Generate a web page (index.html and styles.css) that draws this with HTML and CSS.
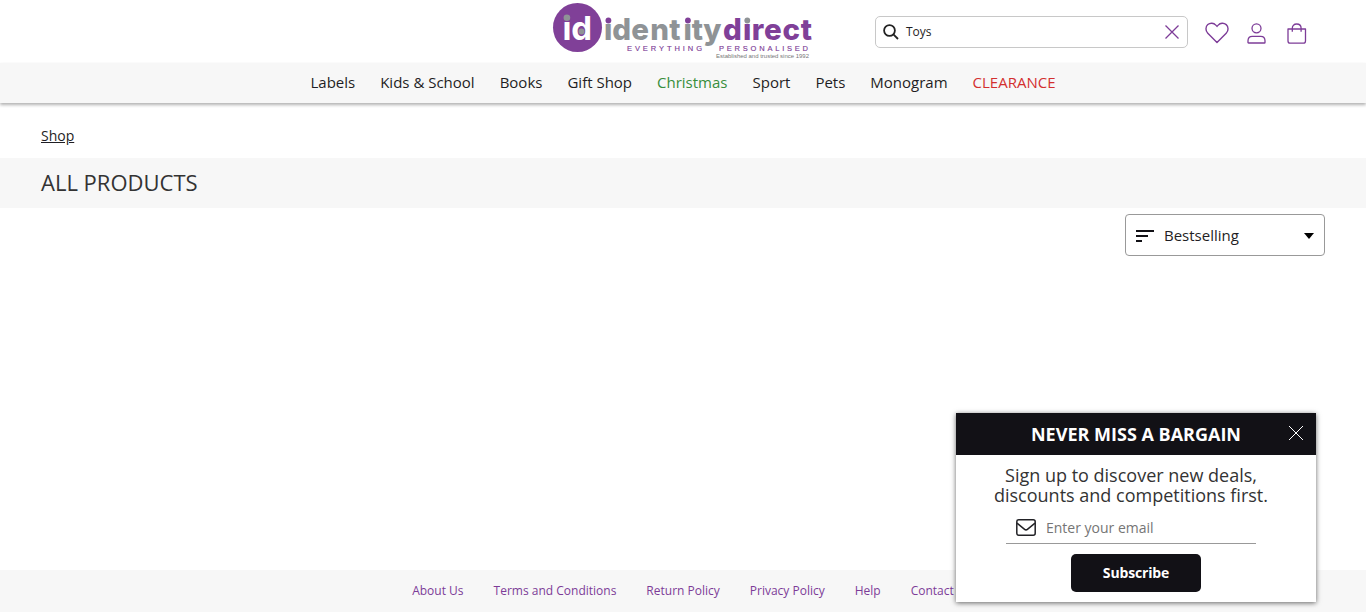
FILE: index.html
```html
<!DOCTYPE html>
<html lang="en">
<head>
<meta charset="utf-8">
<title>All Products | Identity Direct</title>
<link rel="stylesheet" href="styles.css">
</head>
<body>
<header class="header">
  <a class="logo" aria-label="Identity Direct">
    <svg width="264" height="62" viewBox="0 0 264 62">
      <circle cx="25.500" cy="27.500" r="24.500" fill="#804098"/>
      <text class="logo-mark" x="10.400 19.200" y="39.500">ıd</text>
      <circle cx="14.900" cy="17.700" r="3.300" fill="#8f9396"/>
      <circle cx="29.500" cy="31.400" r="3" fill="#8f9396"/>
      <text class="logo-word grey" x="52 60.300 79.300 98.300 117.300 131.500 139.700 151.200" y="40">ıdentıty</text>
      <text class="logo-word purple" x="171 190.900 199.800 212 230.500 248.700" y="40">dırect</text>
      <circle cx="56.400" cy="20.500" r="2.900" fill="#804098"/>
      <circle cx="135.900" cy="20.500" r="2.900" fill="#804098"/>
      <circle cx="195.300" cy="20.500" r="2.900" fill="#8f9396"/>
      <text class="logo-tag" x="75" y="51" textLength="75">EVERYTHING</text>
      <text class="logo-tag" x="167" y="51" textLength="89">PERSONALISED</text>
      <text class="logo-small" x="164" y="58" textLength="93" lengthAdjust="spacingAndGlyphs">Established and trusted since 1992</text>
    </svg>
  </a>
  <div class="search">
    <svg class="search-icon" width="16" height="16" viewBox="0 0 16 16" fill="none" stroke="#222" stroke-width="1.800"><circle cx="6.500" cy="6.500" r="5.400"/><path d="M10.400 10.400 15 15"/></svg>
    <span class="search-text">Toys</span>
    <svg width="14" height="14" viewBox="0 0 14 14" fill="none" stroke="#7d3c98" stroke-width="1.300"><path d="M.5.500l13 13M13.500.500l-13 13"/></svg>
  </div>
  <div class="actions">
    <svg width="24" height="22" viewBox="0 0 24 22" fill="none" stroke="#7d3c98" stroke-width="1.400" stroke-linejoin="round"><path d="M12 20.500 2.800 11.300C.2 8.600.5 4.700 2.800 2.600 5.200.500 8.700.800 10.800 3.100L12 4.400l1.200-1.300c2.100-2.300 5.600-2.600 8-.5 2.300 2.100 2.600 6 0 8.700z"/></svg>
    <svg width="19" height="22" viewBox="0 0 19 22" fill="none" stroke="#7d3c98" stroke-width="1.300" stroke-linejoin="round"><circle cx="9.500" cy="6.300" r="4.500"/><path d="M1 20.400v-1.600c0-2.800 1.700-4.500 4.200-4.500h8.600c2.500 0 4.200 1.700 4.200 4.500v1.600c0 .4-.3.600-.6.600H1.600c-.4 0-.6-.2-.6-.600z"/></svg>
    <svg width="20" height="22" viewBox="0 0 20 22" fill="none" stroke="#7d3c98" stroke-width="1.300" stroke-linejoin="round"><path d="M1 7h17.500v12c0 1.400-.8 2.200-2.200 2.200H3.200C1.800 21.200 1 20.400 1 19z"/><path d="M5.300 9.800V6.300c0-2.700 1.700-4.300 4.400-4.300s4.400 1.600 4.400 4.300v3.500"/></svg>
  </div>
</header>
<nav class="nav">
  <a>Labels</a><a>Kids &amp; School</a><a>Books</a><a>Gift Shop</a><a class="green">Christmas</a><a>Sport</a><a>Pets</a><a>Monogram</a><a class="red">CLEARANCE</a>
</nav>
<main class="main">
  <div class="crumbs"><a>Shop</a></div>
  <h1 class="title">ALL PRODUCTS</h1>
  <div class="toolbar">
    <div class="sort">
      <svg width="18" height="12" viewBox="0 0 18 12" fill="#121116"><path d="M0 0h18v2H0zM0 5h12v2H0zM0 10h6v2H0z"/></svg>
      <span class="sort-text">Bestselling</span>
      <svg width="10" height="6" viewBox="0 0 10 6"><path d="M0 0h10L5 6z"/></svg>
    </div>
  </div>
</main>
<footer class="footer">
  <a>About Us</a><a>Terms and Conditions</a><a>Return Policy</a><a>Privacy Policy</a><a>Help</a><a>Contact</a>
</footer>
<aside class="popup">
  <div class="popup-head">
    <span>NEVER MISS A BARGAIN</span>
    <svg class="popup-close" width="16" height="16" viewBox="0 0 16 16" fill="none" stroke="#fff" stroke-width="1"><path d="M1 1l14 14M15 1 1 15"/></svg>
  </div>
  <div class="popup-body">
    <p class="popup-copy">Sign up to discover new deals,<br>discounts and competitions first.</p>
    <div class="email">
      <svg width="20" height="17" viewBox="0 0 20 17" fill="none" stroke="#222226" stroke-width="1.500" stroke-linejoin="round"><rect x=".8" y=".8" width="18.400" height="15.400" rx="2"/><path d="M1 4.200l7.300 6c1.100.9 2.300.9 3.400 0l7.300-6"/></svg>
      <span>Enter your email</span>
    </div>
    <div class="subscribe">Subscribe</div>
  </div>
</aside>
</body>
</html>
```
FILE: styles.css
```css
* { box-sizing: border-box; }
body {
  margin: 0;
  height: 612px;
  overflow: hidden;
  display: flex;
  flex-direction: column;
  font-family: "Open Sans", sans-serif;
  font-weight: 400;
  color: #1f1e24;
  background: #fff;
}
svg { display: block; flex: none; }

.header {
  height: 63px;
  flex: none;
  display: grid;
  grid-template-columns: 323px 313px auto;
  padding-left: 552px;
  align-items: start;
}
.logo-mark { font: 700 33px Inter, sans-serif; fill: #fff; }
.logo-word { font: 800 29.500px Inter, sans-serif; }
.grey { fill: #8f9396; }
.purple { fill: #804098; }
.logo-tag { font: 400 7.500px "Liberation Sans", sans-serif; fill: #804098; stroke: #804098; stroke-width: .15px; }
.logo-small { font: 400 6px "Liberation Sans", sans-serif; fill: #777; }

.search {
  height: 32px;
  margin-top: 16px;
  padding: 0 8px 0 7px;
  display: flex;
  align-items: center;
  border: 1px solid #c8c8c8;
  border-radius: 5px;
  font-size: 12px;
}
.search-text { flex: 1; padding: 0 0 1px 7px; }
.actions { display: flex; padding: 22px 0 0 17px; }
.actions svg { margin-right: 18px; }
.actions svg:nth-child(2) { margin-right: 21px; }

.nav {
  height: 40px;
  flex: none;
  display: flex;
  justify-content: center;
  gap: 25px;
  line-height: 39px;
  font-size: 15px;
  background: #f7f7f7;
  box-shadow: 0 2px 3px rgba(0, 0, 0, .3);
}
.green { color: #388e3c; }
.red { color: #d32f2f; }

.main { flex: 1; }
.crumbs { height: 55px; padding: 23px 41px 0; font-size: 14px; line-height: 20px; }
.crumbs a { text-decoration: underline; }
.title {
  margin: 0;
  height: 50px;
  padding: 0 41px;
  line-height: 49px;
  font-size: 22px;
  font-weight: 400;
  color: #333;
  background: #f7f7f7;
}
.toolbar { display: flex; justify-content: flex-end; padding: 6px 41px 0; }
.sort {
  width: 200px;
  height: 42px;
  padding: 0 10px;
  display: flex;
  align-items: center;
  border: 1px solid #999;
  border-radius: 4px;
  font-size: 15px;
}
.sort svg { margin-top: 1px; }
.sort-text { flex: 1; padding-left: 10px; }

.footer {
  height: 42px;
  flex: none;
  display: flex;
  justify-content: center;
  gap: 30px;
  line-height: 41px;
  font-size: 12px;
  color: #7d3c98;
  background: #f7f7f7;
}

.popup {
  position: absolute;
  right: 50px;
  bottom: 10px;
  width: 360px;
  height: 189px;
  background: #fff;
  box-shadow: 0 1px 5px rgba(0, 0, 0, .6);
}
.popup-head {
  height: 42px;
  display: flex;
  justify-content: center;
  line-height: 42px;
  font-size: 18px;
  font-weight: 700;
  color: #fff;
  background: #121116;
}
.popup-close { position: absolute; top: 12px; right: 12px; }
.popup-body { display: flex; flex-direction: column; padding: 10px 50px 0; }
.popup-copy {
  margin: 0 -20px 0 -30px;
  text-align: center;
  font-size: 18px;
  line-height: 20px;
  color: #333;
}
.email {
  height: 33px;
  margin-top: 6px;
  padding: 0 10px;
  width: 250px;
  display: flex;
  align-items: center;
  gap: 10px;
  border-bottom: 1px solid #999;
  font-size: 14px;
  color: #757575;
}
.subscribe {
  width: 130px;
  height: 38px;
  margin: 10px auto 0;
  border-radius: 5px;
  text-align: center;
  line-height: 38px;
  font-size: 14px;
  font-weight: 700;
  letter-spacing: -.15px;
  color: #fff;
  background: #121116;
}
```
